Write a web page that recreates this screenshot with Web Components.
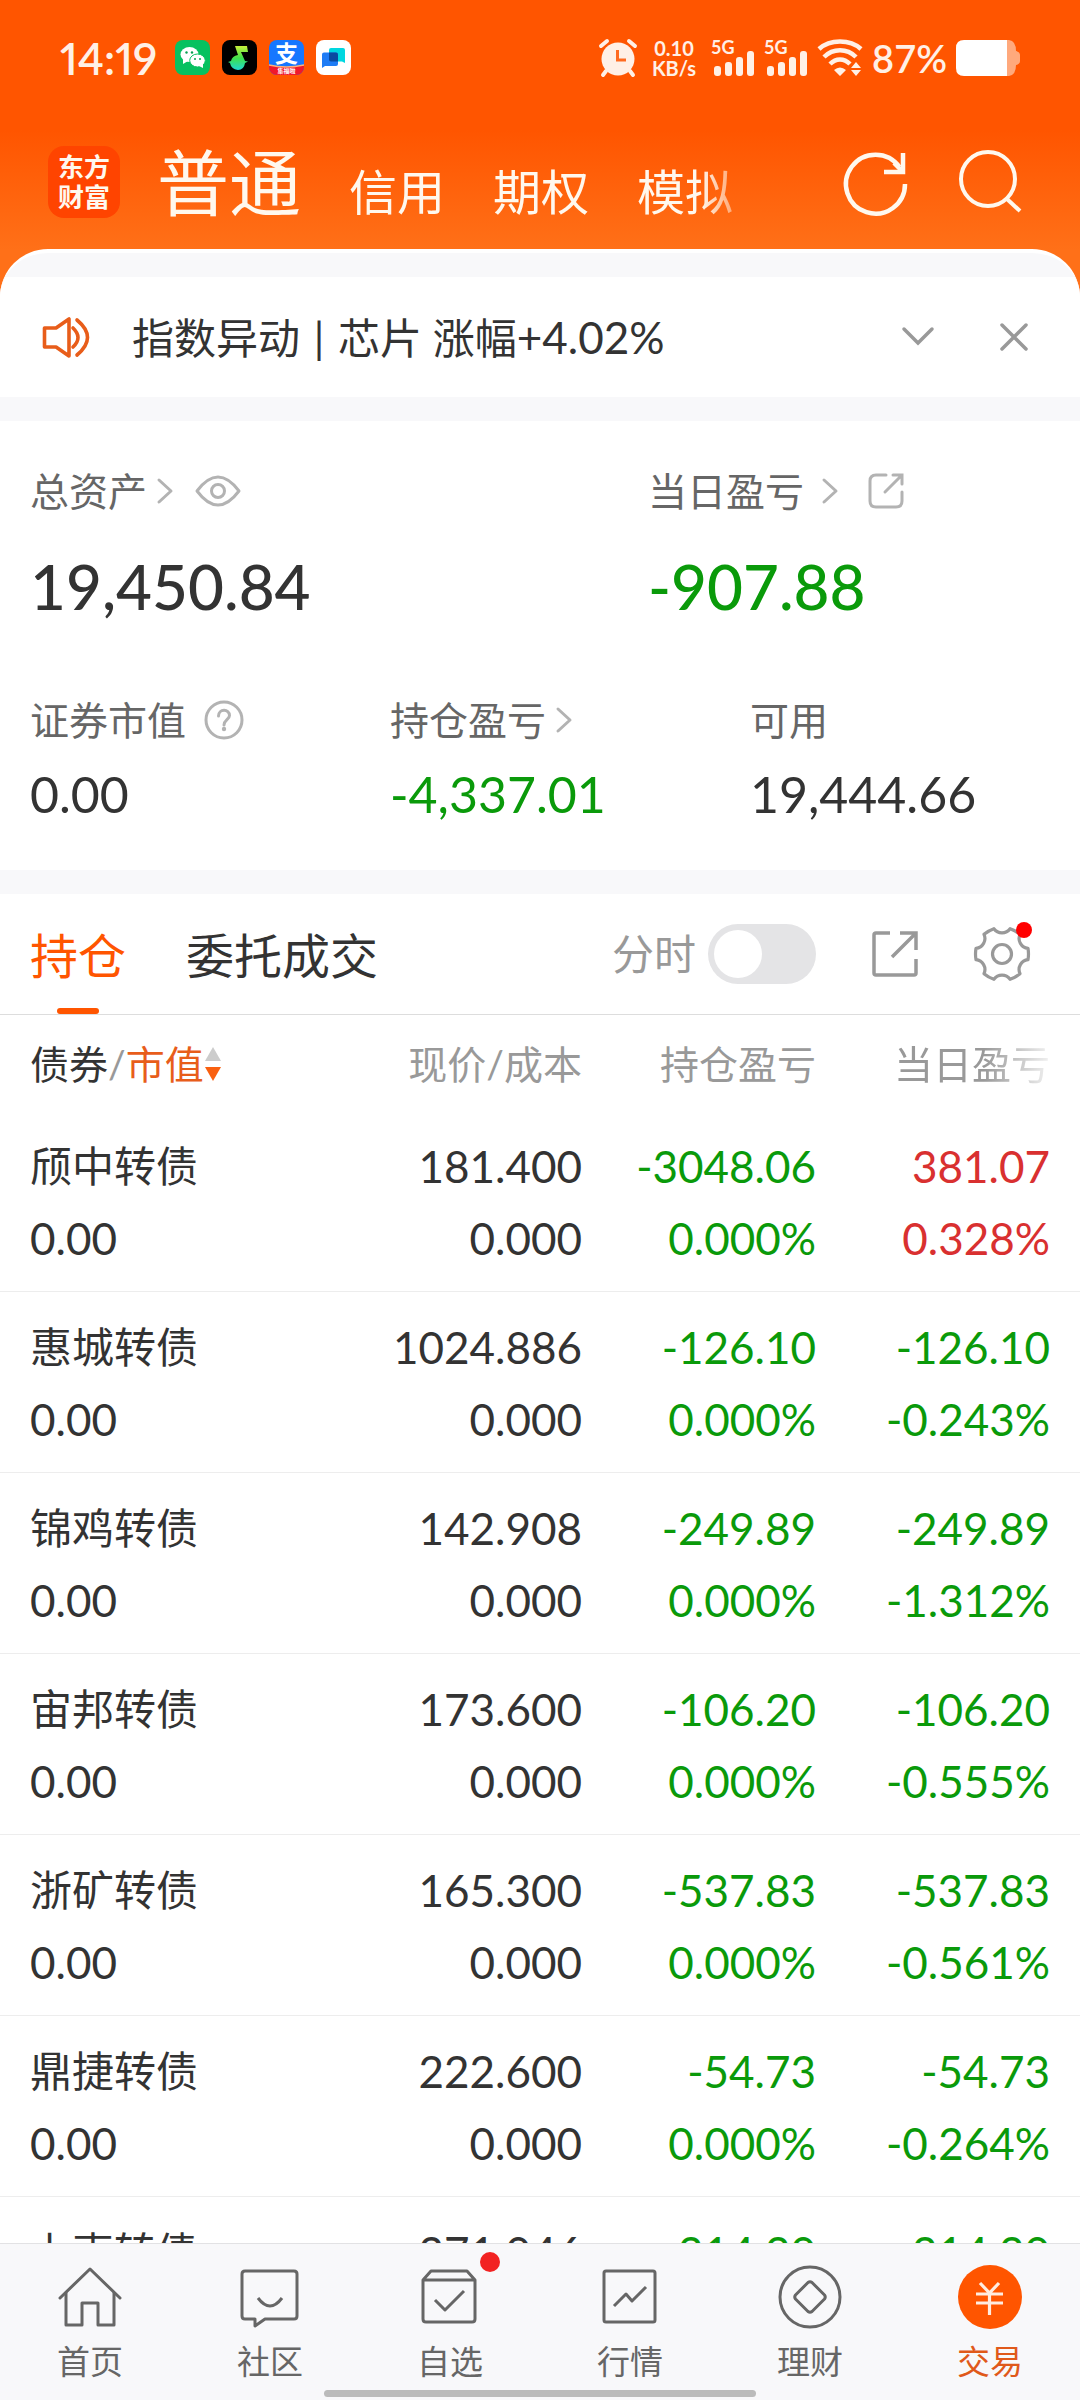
<!DOCTYPE html>
<html lang="zh-CN">
<head>
<meta charset="utf-8">
<meta name="viewport" content="width=device-width, initial-scale=1">
<title>交易</title>
<style>
  html, body { margin: 0; height: 100%; }
  body {
    --brand: #ff5500; --ink: #333; --sub: #666; --mute: #999; --faint: #b3b3b3;
    --band: #f8f8fa; --down: #0a9a0a; --up: #d93030;
    font-family: Lato, "Noto Sans CJK SC", sans-serif;
    color: var(--ink); background: #fff;
  }
</style>
</head>
<body>
<trade-app></trade-app>
<script>
const ICONS = {
  alarm: ['38 38', `<g fill="none" stroke="currentColor" stroke-width="4" stroke-linecap="round"><path d="M2 7 L8 2 M30 2 L36 7 M7 32 L4 36 M31 32 L34 36"/></g><circle cx="19" cy="20" r="16.500" fill="currentColor"/><path d="M18.500 11 V21 H27" fill="none" stroke="#ff6a20" stroke-width="3"/>`],
  bars: ['44 36', `<g fill="currentColor"><rect x="3" y="26" width="7" height="10" rx="3"/><rect x="14" y="22" width="7" height="14" rx="3"/><rect x="25" y="17" width="7" height="19" rx="3"/><rect x="36" y="11" width="7" height="25" rx="3"/></g>`],
  wifi: ['46 36', `<g fill="none" stroke="currentColor" stroke-width="4.500"><path d="M2 9 C13 -1 33 -1 44 9"/><path d="M7 17 C16 8 30 8 39 17"/><path d="M13 24 C19 18 27 18 33 24"/></g><path d="M17 30 Q23 25 29 30 L23 36 Z M39 22 L44 28 H34 Z M39 36 L34 30 H44 Z" fill="currentColor"/>`],
  battery: ['64 36', `<path d="M50 0 H53 Q60 1 60 11 Q64 12 64 15 V21 Q64 24 60 25 Q60 35 53 36 H50 Z" fill="#ffa97c"/><path d="M8 0 H51 V36 H8 Q0 36 0 28 V8 Q0 0 8 0 Z" fill="#fff"/>`],
  wechat: ['35 35', `<rect width="35" height="35" rx="8" fill="#07c160"/><ellipse cx="14.500" cy="14.500" rx="9" ry="7.500" fill="#fff"/><path d="M8 19 L8 24 L13 21 Z" fill="#fff"/><ellipse cx="22.500" cy="20.500" rx="7.800" ry="6.500" fill="#fff" stroke="#07c160" stroke-width="1"/><path d="M24 26 L28 28 L28 23 Z" fill="#fff"/><g fill="#07a050"><circle cx="11.500" cy="12.500" r="1.200"/><circle cx="17" cy="12.500" r="1.200"/><circle cx="20" cy="19" r="1"/><circle cx="25" cy="19" r="1"/></g>`],
  music: ['35 35', `<defs><linearGradient id="m" x1="0" y1="0" x2="0" y2="1"><stop offset="0" stop-color="#c8f03c"/><stop offset=".5" stop-color="#3fe04a"/><stop offset="1" stop-color="#1fd8d0"/></linearGradient></defs><rect width="35" height="35" rx="8" fill="#000"/><path d="M13 6 L25 6 L26 12 L19 12 L23 21 L26 21.500 L23 23 Q22 30 16 30 Q9 29 8 23 L6 22 L9 21 Q10 16 16 15 Z" fill="url(#m)"/>`],
  alipay: ['35 35', `<clipPath id="c"><rect width="35" height="35" rx="8"/></clipPath><g clip-path="url(#c)"><rect width="35" height="35" fill="#1677ff"/><path d="M0 25 Q17 29 35 25 V35 H0 Z" fill="#f0182c"/><path d="M0 25 Q17 29 35 25" fill="none" stroke="#ffb27a" stroke-width="1.500"/></g><text x="17.500" y="22" font-size="23" font-weight="700" fill="#fff" text-anchor="middle" font-family="Noto Sans CJK SC">支</text><text x="17.500" y="33" font-size="6" font-weight="700" fill="#fff" text-anchor="middle" font-family="Noto Sans CJK SC">集福啦</text>`],
  meeting: ['35 35', `<rect width="35" height="35" rx="8" fill="#fff"/><path d="M15 8 H27 Q29 8 29 10 V23 L26 21.500 H15 Q13 21.500 13 19.500 V10 Q13 8 15 8Z" fill="#00d7e0"/><path d="M8 12.500 H20 Q22 12.500 22 14.500 V24 Q22 26 20 26 H9 L6 28 V14.500 Q6 12.500 8 12.500Z" fill="#1e7cf5"/><path d="M13 12.500 H20 Q22 12.500 22 14.500 V21.500 H15 Q13 21.500 13 19.500 Z" fill="#0a4aa0"/>`],
  refresh: ['64 64', `<g fill="none" stroke="currentColor" stroke-width="4.500"><path d="M61 34 A29.500 29.500 0 1 1 55.500 17"/><path d="M59 3 V22 H40"/><path d="M50 13 L58 21"/></g>`],
  search: ['64 64', `<g fill="none" stroke="currentColor" stroke-width="4"><circle cx="30" cy="29" r="27"/><path d="M49 49 L62 61"/></g>`],
  speaker: ['48 42', `<g fill="none" stroke="currentColor" stroke-width="3.600" stroke-linejoin="round" stroke-linecap="round"><path d="M2.500 12 H14 L27 3 V40 L14 31 H2.500 Z"/><path d="M31 12 Q41 21.500 31 31"/><path d="M35 4 Q56 21.500 35 39"/></g>`],
  down: ['48 48', `<path d="M10 16 L24 30 L38 16" fill="none" stroke="currentColor" stroke-width="3.500" stroke-linecap="round"/>`],
  close: ['48 48', `<path d="M12 12 L36 36 M36 12 L12 36" fill="none" stroke="currentColor" stroke-width="3.500" stroke-linecap="round"/>`],
  more: ['16 26', `<path d="M2 2 L14 13 L2 24" fill="none" stroke="currentColor" stroke-width="3" stroke-linecap="round" stroke-linejoin="round"/>`],
  eye: ['46 32', `<g fill="none" stroke="currentColor" stroke-width="3"><path d="M2 16 Q23 -12 44 16 Q23 44 2 16 Z" stroke-linejoin="round"/><circle cx="23" cy="16" r="6.500"/></g>`],
  share: ['36 36', `<g fill="none" stroke="currentColor" stroke-width="3" stroke-linecap="round"><path d="M18 2 H8 Q2 2 2 8 V28 Q2 34 8 34 H28 Q34 34 34 28 V19"/><path d="M25 2 H34 V11 M33 3 L17 19"/></g>`],
  help: ['40 40', `<g fill="none" stroke="currentColor" stroke-width="3"><circle cx="20" cy="20" r="18"/><path d="M14.500 16 C14.500 8.500 25.500 8.500 25.500 15.500 C25.500 19.500 20 20 20 25" stroke-linecap="round"/></g><circle cx="20" cy="29" r="2.200" fill="currentColor"/>`],
  export: ['48 48', `<g fill="none" stroke="currentColor" stroke-width="3.500"><path d="M19 3 H5 Q3 3 3 5 V43 Q3 45 5 45 H43 Q45 45 45 43 V29"/><path d="M29 3 H45 V20 M44 4 L21 27"/></g>`],
  gear: ['56 56', `<g transform="translate(28 28)" fill="none" stroke="currentColor" stroke-width="3.200" stroke-linejoin="round"><path d="M26 -5.600 Q27 0 26 5.600 A10 10 0 0 0 18 19.700 Q13.500 23.400 8.100 25.300 A10 10 0 0 0 -8.100 25.300 Q-13.500 23.400 -18 19.700 A10 10 0 0 0 -26 5.600 Q-27 0 -26 -5.600 A10 10 0 0 0 -18 -19.700 Q-13.500 -23.400 -8.100 -25.300 A10 10 0 0 0 8.100 -25.300 Q13.500 -23.400 18 -19.700 A10 10 0 0 0 26 -5.600 Z"/><circle r="9.500"/></g>`],
  sort: ['16 36', `<path d="M8 1 L16 15 H0 Z" fill="#ccc"/><path d="M8 35 L16 21 H0 Z" fill="#f96010"/>`],
  home: ['64 64', `<g fill="none" stroke="currentColor" stroke-width="3" stroke-linejoin="round" stroke-linecap="round"><path d="M2 33 L32 4 L62 33"/><path d="M8 28 V60 H24 V38 H40 V60 H56 V28"/></g>`],
  chat: ['64 64', `<g fill="none" stroke="currentColor" stroke-width="3" stroke-linejoin="round"><path d="M7 6 H56 Q59 6 59 9 V51 Q59 54 56 54 H27 L17 61 V54 H7 Q4 54 4 51 V9 Q4 6 7 6 Z"/><path d="M20 33 Q32 49 44 33"/></g>`],
  pick: ['64 64', `<g fill="none" stroke="currentColor" stroke-width="3" stroke-linejoin="round"><path d="M5 15 L13 6 H49 L57 15 V54 Q57 57 54 57 H8 Q5 57 5 54 Z M5 15 H57"/><path d="M17 35 L27 45 L46 26"/></g>`],
  market: ['64 64', `<g fill="none" stroke="currentColor" stroke-width="3" stroke-linejoin="round"><rect x="6" y="6" width="51" height="51" rx="2"/><path d="M16 41 L28 29 L34 36 L48 22"/></g>`],
  wealth: ['64 64', `<g fill="none" stroke="currentColor" stroke-width="3" stroke-linejoin="round"><circle cx="32" cy="32" r="30"/><path d="M34 17.500 L46.500 30 Q48 32 46.500 34 L34 46.500 Q32 48 30 46.500 L17.500 34 Q16 32 17.500 30 L30 17.500 Q32 16 34 17.500 Z"/></g>`],
  trade: ['64 64', `<circle cx="32" cy="32" r="32" fill="#ff5500"/><path d="M22 18 L31.500 28 L41 18 M18 29 H45 M18 38 H45 M31.500 28 V50" fill="none" stroke="#ffece0" stroke-width="3.200"/>`]
};

function define(name, css, html) {
  const tpl = document.createElement('template');
  tpl.innerHTML = `<style>*{box-sizing:border-box}button{border:0;padding:0;margin:0;background:none;font:inherit;color:inherit;cursor:pointer}a{color:inherit;text-decoration:none}${css}</style>${html}`;
  customElements.define(name, class extends HTMLElement {
    constructor() {
      super();
      this.attachShadow({ mode: 'open' }).append(tpl.content.cloneNode(true));
    }
  });
}

customElements.define('ui-icon', class extends HTMLElement {
  connectedCallback() {
    if (this.shadowRoot) return;
    const [box, body] = ICONS[this.getAttribute('name')];
    const [w, h] = box.split(' ');
    this.attachShadow({ mode: 'open' }).innerHTML =
      `<style>:host{display:block;flex:none}svg{display:block;overflow:visible}</style><svg width="${w}" height="${h}" viewBox="0 0 ${box}" aria-hidden="true">${body}</svg>`;
  }
});

define('signal-bars', `
  :host { display: block; position: relative; flex: none; }
  span { position: absolute; left: 0; top: 0; font-size: 18px; line-height: 14px; font-weight: 700; }`,
  `<ui-icon name="bars"></ui-icon><span>5G</span>`);

define('status-bar', `
  :host { display: flex; justify-content: space-between; align-items: center; height: 115px; padding: 0 60px; color: #fff0e6; }
  div { display: flex; align-items: center; }
  .apps { gap: 12px; }
  .sys { gap: 9px; }
  .time { font-size: 44px; line-height: 48px; font-weight: 600; font-variant-numeric: proportional-nums; margin-right: 6px; }
  .rate { font-size: 20px; line-height: 20px; font-weight: 700; margin: 0 6px; text-align: center; }
  .pct { font-size: 38px; line-height: 48px; font-weight: 600; }`,
  `<div class="apps"><span class="time">14:19</span><ui-icon name="wechat"></ui-icon><ui-icon name="music"></ui-icon><ui-icon name="alipay"></ui-icon><ui-icon name="meeting"></ui-icon></div>
   <div class="sys"><ui-icon name="alarm"></ui-icon><span class="rate">0.10<br>KB/s</span><signal-bars></signal-bars><signal-bars></signal-bars><ui-icon name="wifi"></ui-icon><span class="pct">87%</span><ui-icon name="battery"></ui-icon></div>`);

define('account-header', `
  :host { display: flex; align-items: center; height: 134px; padding: 0 58px 0 48px; color: #fff8ee; }
  .logo { display: block; width: 72px; height: 72px; padding: 6px 10px; border-radius: 16px; background: #ff4400; font-size: 26px; line-height: 30px; font-weight: 700; }
  nav { flex: 1; min-width: 0; display: flex; align-items: baseline; gap: 48px; margin: 0 84px 0 37px; padding-top: 10px; overflow: hidden; white-space: nowrap; font-size: 48px; line-height: 108px;
    -webkit-mask-image: linear-gradient(to right, #000 calc(100% - 60px), transparent); mask-image: linear-gradient(to right, #000 calc(100% - 60px), transparent); }
  button { flex: none; }
  .on { font-size: 72px; }
  .acts { display: flex; gap: 50px; }`,
  `<a class="logo" href="#home">东方财富</a>
   <nav><button class="on">普通</button><button>信用</button><button>期权</button><button>模拟</button></nav>
   <div class="acts"><button aria-label="刷新"><ui-icon name="refresh"></ui-icon></button><button aria-label="搜索"><ui-icon name="search"></ui-icon></button></div>`);

define('notice-bar', `
  :host { display: flex; align-items: center; gap: 42px; height: 120px; padding: 0 42px; background: #fff; }
  p { flex: 1; margin: 0; font-size: 42px; line-height: 48px; white-space: nowrap; }
  .mark { color: #e85d1a; }
  .acts { display: flex; gap: 48px; color: var(--mute); }
  ::slotted(.sep) { margin: 0 3px; }
  ::slotted(.num) { font-size: 44px; }`,
  `<ui-icon class="mark" name="speaker"></ui-icon><p><slot></slot></p>
   <div class="acts"><button aria-label="展开"><ui-icon name="down"></ui-icon></button><button aria-label="关闭"><ui-icon name="close"></ui-icon></button></div>`);

define('asset-metric', `
  :host { display: block; min-width: 0; }
  .label { display: flex; align-items: center; gap: 10px; font-size: 39px; line-height: 48px; color: var(--sub); }
  :host([wide]) .label { gap: 18px; }
  .value { margin-top: 20px; font-size: 50px; line-height: 60px; }
  :host([large]) .value { margin-top: 35px; font-size: 62px; line-height: 72px; font-weight: 500; }
  :host([tone=down]) .value { color: var(--down); }
  ::slotted(ui-icon) { color: var(--faint); }
  ::slotted(ui-icon[apart]) { margin-left: 12px; }`,
  `<div class="label"><slot name="label"></slot><slot name="icon"></slot></div><div class="value"><slot></slot></div>`);

define('asset-summary', `
  :host { display: block; padding: 46px 0; background: #fff; }
  .row { display: grid; }
  .row > * { padding-left: 30px; }
  .main { grid-template-columns: 3fr 2fr; margin-bottom: 74px; }
  .main > :last-child { padding-left: 0; }
  .rest { grid-template-columns: repeat(3, 1fr); }`,
  `<div class="row main">
     <asset-metric large><span slot="label">总资产</span><ui-icon slot="icon" name="more"></ui-icon><ui-icon slot="icon" name="eye" apart></ui-icon>19,450.84</asset-metric>
     <asset-metric large wide tone="down"><span slot="label">当日盈亏</span><ui-icon slot="icon" name="more"></ui-icon><ui-icon slot="icon" name="share" apart></ui-icon>-907.88</asset-metric>
   </div>
   <div class="row rest">
     <asset-metric wide><span slot="label">证券市值</span><ui-icon slot="icon" name="help"></ui-icon>0.00</asset-metric>
     <asset-metric tone="down"><span slot="label">持仓盈亏</span><ui-icon slot="icon" name="more"></ui-icon>-4,337.01</asset-metric>
     <asset-metric><span slot="label">可用</span>19,444.66</asset-metric>
   </div>`);

define('holding-tabs', `
  :host { display: flex; align-items: center; justify-content: space-between; height: 121px; padding: 0 50px 0 30px; border-bottom: 1px solid #ddd; background: #fff; }
  .tabs { display: flex; align-self: stretch; gap: 60px; font-size: 48px; }
  .tabs button { position: relative; padding-bottom: 3px; }
  .on { color: var(--brand); }
  .on::after { content: ""; position: absolute; left: 50%; bottom: 0; width: 42px; height: 6px; margin-left: -21px; border-radius: 3px; background: var(--brand); }
  .tools { display: flex; align-items: center; gap: 55px; color: var(--mute); }
  label { display: flex; align-items: center; gap: 12px; font-size: 42px; line-height: 48px; }
  input { appearance: none; width: 108px; height: 60px; margin: 0; padding: 6px; border-radius: 30px; background: #e4e4e6; }
  input::before { content: ""; display: block; width: 48px; height: 48px; border-radius: 50%; background: #fff; }
  input:checked { background: var(--brand); }
  input:checked::before { margin-left: auto; }
  .set { position: relative; }
  .set i { position: absolute; right: -2px; top: -4px; width: 16px; height: 16px; border-radius: 50%; background: #f00; }`,
  `<div class="tabs"><button class="on">持仓</button><button>委托成交</button></div>
   <div class="tools"><label for="fs">分时<input id="fs" type="checkbox"></label>
   <button aria-label="导出"><ui-icon name="export"></ui-icon></button>
   <button class="set" aria-label="设置"><ui-icon name="gear"></ui-icon><i></i></button></div>`);

const HOLDINGS = [
  [['颀中转债', '0.00'], ['181.400', '0.000'], ['-3048.06', '0.000%'], ['381.07', '0.328%']],
  [['惠城转债', '0.00'], ['1024.886', '0.000'], ['-126.10', '0.000%'], ['-126.10', '-0.243%']],
  [['锦鸡转债', '0.00'], ['142.908', '0.000'], ['-249.89', '0.000%'], ['-249.89', '-1.312%']],
  [['宙邦转债', '0.00'], ['173.600', '0.000'], ['-106.20', '0.000%'], ['-106.20', '-0.555%']],
  [['浙矿转债', '0.00'], ['165.300', '0.000'], ['-537.83', '0.000%'], ['-537.83', '-0.561%']],
  [['鼎捷转债', '0.00'], ['222.600', '0.000'], ['-54.73', '0.000%'], ['-54.73', '-0.264%']],
  [['上声转债'], ['271.046'], ['-214.20'], ['-214.20']]
];
const tone = (col, text) => col < 2 ? '' : text[0] === '-' ? 'down' : 'up';
const rows = HOLDINGS.map(cells => `<tr>${cells.map((lines, col) =>
  `<td class="${tone(col, lines[0])}">${lines.map(t => `<p>${t}</p>`).join('')}</td>`).join('')}</tr>`).join('');

define('holding-table', `
  :host { display: block; background: #fff; }
  table { width: 100%; table-layout: fixed; border-collapse: separate; border-spacing: 0; }
  th { padding: 25px 0 23px; font-size: 39px; line-height: 48px; font-weight: 400; color: var(--mute); text-align: right; white-space: nowrap; width: 234px; }
  td { padding: 19px 0 17px; border-bottom: 1px solid #ededed; font-size: 44px; text-align: right; }
  th:first-child, td:first-child { width: auto; padding-left: 30px; text-align: left; }
  th:last-child, td:last-child { width: 264px; padding-right: 30px; }
  p { margin: 0; line-height: 72px; }
  td:first-child p:first-child { font-size: 42px; }
  .down { color: var(--down); }
  .up { color: var(--up); }
  th button { display: flex; align-items: center; }
  b { font-weight: 400; color: var(--ink); }
  em { font-style: normal; color: #e85d1a; margin-right: 1px; }
  .fade { -webkit-mask-image: linear-gradient(to right, #000 calc(100% - 96px), transparent calc(100% - 20px)); mask-image: linear-gradient(to right, #000 calc(100% - 96px), transparent calc(100% - 20px)); }`,
  `<table><thead><tr><th><button><b>债券</b>/<em>市值</em><ui-icon name="sort"></ui-icon></button></th><th>现价/成本</th><th>持仓盈亏</th><th class="fade">当日盈亏</th></tr></thead><tbody>${rows}</tbody></table>`);

define('nav-item', `
  :host { display: block; flex: 1; color: var(--sub); }
  :host([active]) { color: #e0591a; }
  a { display: flex; flex-direction: column; align-items: center; gap: 12px; font-size: 33px; line-height: 40px; }
  .pic { position: relative; }
  i { display: none; position: absolute; right: -18px; top: -13px; width: 20px; height: 20px; border-radius: 50%; background: #f22222; }
  :host([dot]) i { display: block; }`,
  `<a href="#tab"><span class="pic"><slot name="icon"></slot><i></i></span><slot></slot></a>`);

define('bottom-nav', `
  :host { display: block; position: relative; flex: none; padding: 21px 0 19px; border-top: 1px solid #e2e2e4; background: var(--band); }
  nav { display: flex; }
  .grip { position: absolute; left: 30%; right: 30%; bottom: 3px; height: 7px; border-radius: 4px; background: #bbb; }`,
  `<nav>
    <nav-item><ui-icon slot="icon" name="home"></ui-icon>首页</nav-item>
    <nav-item><ui-icon slot="icon" name="chat"></ui-icon>社区</nav-item>
    <nav-item dot><ui-icon slot="icon" name="pick"></ui-icon>自选</nav-item>
    <nav-item><ui-icon slot="icon" name="market"></ui-icon>行情</nav-item>
    <nav-item><ui-icon slot="icon" name="wealth"></ui-icon>理财</nav-item>
    <nav-item active><ui-icon slot="icon" name="trade"></ui-icon>交易</nav-item>
  </nav><div class="grip"></div>`);

define('trade-app', `
  :host { display: flex; flex-direction: column; height: 100vh; background: linear-gradient(#ff5500 130px, #ff7018 250px, #ff7018); }
  status-bar, account-header { flex: none; }
  main { flex: 1; min-height: 0; overflow: hidden; display: flex; flex-direction: column; gap: 24px; border-top: 4px solid #fff; border-radius: 48px 48px 0 0; padding-top: 24px; background: var(--band); }
  main > * { flex: none; }`,
  `<status-bar></status-bar><account-header></account-header>
   <main>
     <notice-bar>指数异动 <span class="sep">|</span> 芯片 涨幅<span class="num">+4.02%</span></notice-bar>
     <asset-summary></asset-summary>
     <section><holding-tabs></holding-tabs><holding-table></holding-table></section>
   </main>
   <bottom-nav></bottom-nav>`);
</script>
</body>
</html>
